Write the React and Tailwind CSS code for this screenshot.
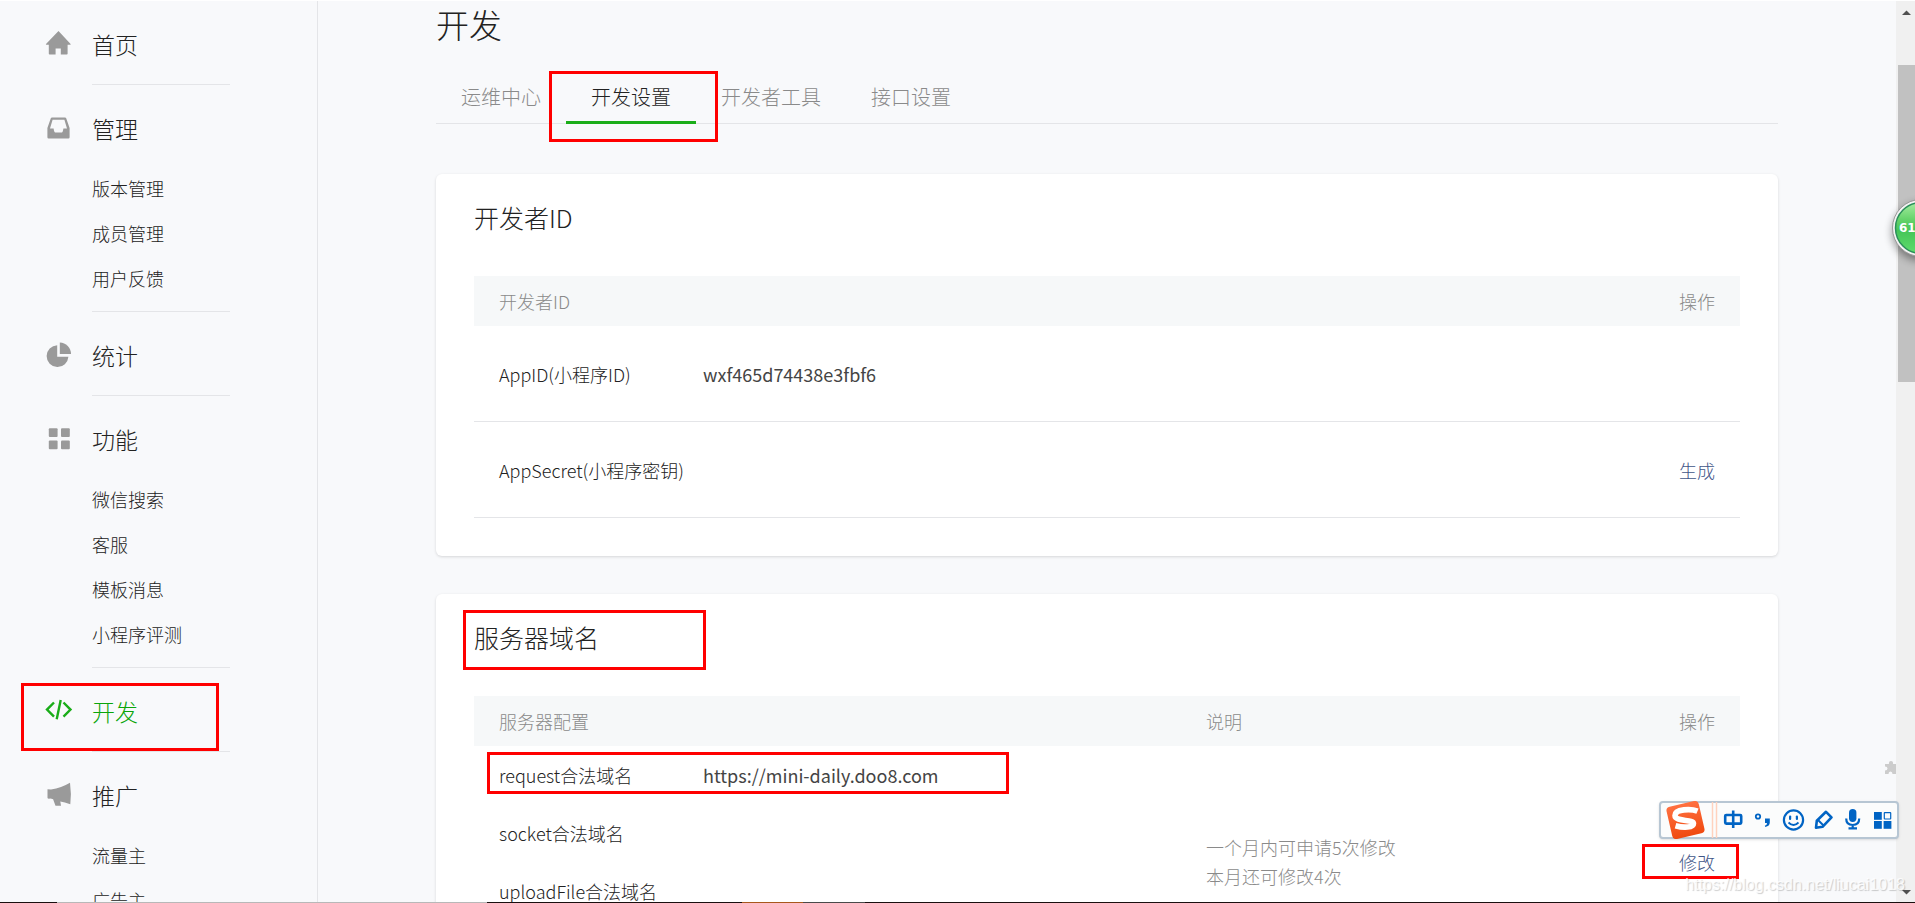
import React from 'react';

const menu = [
  { title: '首页', icon: 'home', children: [] },
  { title: '管理', icon: 'inbox', children: ['版本管理', '成员管理', '用户反馈'] },
  { title: '统计', icon: 'pie', children: [] },
  { title: '功能', icon: 'grid', children: ['微信搜索', '客服', '模板消息', '小程序评测'] },
  { title: '开发', icon: 'code', children: [], active: true, marked: true },
  { title: '推广', icon: 'horn', children: ['流量主', '广告主'] },
];

const tabs = ['运维中心', '开发设置', '开发者工具', '接口设置'];

const domains = [
  { name: 'request合法域名', value: 'https://mini-daily.doo8.com' },
  { name: 'socket合法域名', value: '' },
  { name: 'uploadFile合法域名', value: '' },
  { name: 'downloadFile合法域名', value: '' },
];

const MenuIcon = ({ name }) => (
  <svg width="28" height="28" viewBox="0 0 28 28" fill="currentColor" aria-hidden="true">
    {name === 'home' && (
      <path d="M13.500 1 1 14q-.4.8.4.8h2.400v9q0 .8.8.8h6v-6.200h5.200v6.200h6q.8 0 .8-.8v-9h2.600q.8 0 .4-.8z" />
    )}
    {name === 'inbox' && (
      <path
        fillRule="evenodd"
        d="M7 3.500h13q.9 0 1.200.8L24.600 14V23.300Q24.600 24.500 23.400 24.500H3.600Q2.400 24.500 2.400 23.300V14L5.800 4.300Q6.100 3.500 7 3.500zM7.600 5.700 5 14.500H8.600Q9.200 18.500 10.200 18.500H16.800Q17.800 18.500 18.400 14.500H22L19.400 5.700z"
      />
    )}
    {name === 'pie' && (
      <>
        <path d="M12.200 4.200V15.800H23.400A10.900 10.900 0 1 1 12.200 4.200z" />
        <path d="M14.800 1.600A11.400 11.400 0 0 1 26 13H14.800z" />
      </>
    )}
    {name === 'grid' && (
      <>
        <rect x="3.800" y="3.200" width="8.800" height="8.800" rx="1" />
        <rect x="16" y="3.200" width="8.800" height="8.800" rx="1" />
        <rect x="3.800" y="15.400" width="8.800" height="8.800" rx="1" />
        <rect x="16" y="15.400" width="8.800" height="8.800" rx="1" />
      </>
    )}
    {name === 'code' && (
      <g fill="none" stroke="currentColor" strokeWidth="2.400">
        <path d="M9 5.500 2 12.600l7 7.100M18.500 5.500l7 7.100-7 7.100M15.700 2.900l-4 19.400" />
      </g>
    )}
    {name === 'horn' && (
      <path d="M2.500 8.200q2 0 3.500.3Q16.500 6.700 25 1.700q1.600 11 .3 21.500Q19.500 21.200 15.300 20.500L16 24.700H10.500L8.100 18.200Q5.500 17.200 4 17.700 2.500 17.700 2.500 16.700z" />
    )}
  </svg>
);

const Mark = ({ className }) => (
  <span className={`pointer-events-none absolute border-3 border-[#ff0000] ${className}`} />
);

const Sidebar = () => (
  <nav className="w-[318px] shrink-0 border-r border-[#e4e5e8]">
    <ul>
      {menu.map((item, i) => (
        <li key={item.title} className="relative flex">
          <span className={`w-[92px] shrink-0 pl-[45px] pt-[30px] ${item.active ? 'text-[#1aad19]' : 'text-[#9a9a9a]'}`}>
            <MenuIcon name={item.icon} />
          </span>
          <div
            className={`w-[138px] border-t pt-[21px] ${i > 0 ? 'border-[#e4e5e8]' : 'border-transparent'} ${
              item.children.length ? 'pb-[10px]' : 'pb-[17px]'
            }`}
          >
            <a
              href="#"
              className={`block text-[23px] leading-[45px] ${item.active ? 'text-[#0aa50a]' : 'text-[#222222]'}`}
            >
              {item.title}
            </a>
            {item.children.length > 0 && (
              <ul className="mt-[15px]">
                {item.children.map((child) => (
                  <li key={child}>
                    <a href="#" className="block text-lg leading-[45px] text-[#222222]">
                      {child}
                    </a>
                  </li>
                ))}
              </ul>
            )}
          </div>
          {item.marked && <Mark className="left-[21px] top-4 h-[68px] w-[198px]" />}
        </li>
      ))}
    </ul>
  </nav>
);

const Tabs = () => (
  <div className="flex border-b border-[#e4e5e8]">
    {tabs.map((tab, i) => (
      <div key={tab} className="relative">
        <a
          href="#"
          className={`-mb-px block border-b-3 px-[25px] pb-2 text-xl leading-8 ${
            i === 1 ? 'border-[#1aad19] text-[#222222]' : 'border-transparent text-[#8a8a8a]'
          }`}
        >
          {tab}
        </a>
        {i === 1 && <Mark className="-left-[17px] -top-[10px] z-10 h-[71px] w-[169px]" />}
      </div>
    ))}
  </div>
);

const Card = ({ title, marked, children }) => (
  <section className="rounded-md bg-white px-[38px] pb-[38px] pt-[26px] shadow-[0_1px_3px_rgba(0,0,0,0.14)]">
    <h2 className="relative mb-[42px] text-[25px] leading-[34px] text-[#222222]">
      {title}
      {marked && <Mark className="-left-[11px] -top-[10px] h-[60px] w-[243px]" />}
    </h2>
    {children}
  </section>
);

const headCell = 'h-[50px] bg-[#f6f8f9] px-[25px] font-light text-[#8a8a8a]';
const lineCell = 'h-24 border-b border-[#e4e5e8]';

const DeveloperTable = () => (
  <table className="w-full table-fixed border-separate border-spacing-0 text-lg text-[#222222]">
    <thead>
      <tr>
        <th className={`${headCell} w-[204px] text-left`}>开发者ID</th>
        <th className={headCell} />
        <th className={`${headCell} w-40 text-right`}>操作</th>
      </tr>
    </thead>
    <tbody>
      <tr>
        <td className={`${lineCell} whitespace-nowrap pl-[25px]`}>AppID(小程序ID)</td>
        <td className={`${lineCell} pl-[25px] font-normal text-[#444444]`}>wxf465d74438e3fbf6</td>
        <td className={lineCell} />
      </tr>
      <tr>
        <td className={`${lineCell} whitespace-nowrap pl-[25px]`}>AppSecret(小程序密钥)</td>
        <td className={lineCell} />
        <td className={`${lineCell} pr-[25px] text-right`}>
          <a href="#" className="text-[#3f5688]">生成</a>
        </td>
      </tr>
    </tbody>
  </table>
);

const DomainTable = () => (
  <table className="w-full table-fixed border-separate border-spacing-0 text-lg text-[#222222]">
    <thead>
      <tr>
        <th className={`${headCell} w-[204px] text-left`}>服务器配置</th>
        <th className={headCell} />
        <th className={`${headCell} w-[399px] text-left`}>说明</th>
        <th className={`${headCell} w-40 text-right`}>操作</th>
      </tr>
    </thead>
    <tbody>
      {domains.map((d, i) => (
        <tr key={d.name} className="h-[58px]">
          <td className="relative whitespace-nowrap pl-[25px]">
            {d.name}
            {i === 0 && <Mark className="left-[13px] top-[6px] h-[42px] w-[522px]" />}
          </td>
          <td className="pl-[25px] font-normal text-[#444444]">{d.value}</td>
          {i === 0 && (
            <>
              <td rowSpan={4} className="pl-[25px] leading-[29px] text-[#8a8a8a]">
                <p>一个月内可申请5次修改</p>
                <p>本月还可修改4次</p>
              </td>
              <td rowSpan={4} className="pr-[25px] text-right">
                <span className="relative inline-block">
                  <a href="#" className="text-[#3f5688]">修改</a>
                  <Mark className="-right-6 -top-1 h-[35px] w-[97px]" />
                </span>
              </td>
            </>
          )}
        </tr>
      ))}
    </tbody>
  </table>
);

const Scrollbar = () => (
  <div className="flex w-[19px] shrink-0 flex-col bg-[#f0f0f0] pl-0.5">
    <svg className="h-16 w-full" viewBox="0 0 17 64" fill="#505050" aria-hidden="true">
      <path d="M4 14 8.500 9.500 13 14z" />
    </svg>
    <div className="h-[317px] bg-[#c1c1c1]" />
    <svg className="mt-auto h-5 w-full" viewBox="0 0 17 20" fill="#505050" aria-hidden="true">
      <path d="M4 7h9L8.500 11.500z" />
    </svg>
  </div>
);

const SpeedBall = () => (
  <svg className="absolute -right-[45px] top-[187px]" width="80" height="84" viewBox="0 0 80 84">
    <defs>
      <linearGradient id="ball" x1="0" y1="0" x2="0" y2="1">
        <stop offset="0" stopColor="#a5eba0" />
        <stop offset="0.350" stopColor="#62d268" />
        <stop offset="0.550" stopColor="#45c558" />
        <stop offset="1" stopColor="#5fdc6c" />
      </linearGradient>
      <filter id="ballShadow" x="-30%" y="-30%" width="160%" height="160%">
        <feGaussianBlur stdDeviation="4" />
      </filter>
    </defs>
    <circle cx="41" cy="44" r="29" fill="#000" opacity="0.400" filter="url(#ballShadow)" />
    <circle cx="41" cy="40" r="28.500" fill="#f3f3f3" stroke="#999" />
    <circle cx="41" cy="40" r="25.500" fill="url(#ball)" stroke="#2b8f5a" strokeWidth="1.500" />
    <text x="19" y="44" fontSize="12" fontWeight="700" fill="#fff" fontFamily="DejaVu Sans">61</text>
  </svg>
);

const InputToolbar = () => (
  <div className="absolute bottom-16 right-4 flex h-[38px] w-60 items-center rounded border-2 border-[#b7c6d3] bg-[#fbfcfc] text-[#0064c4] shadow-sm">
    <svg width="236" height="38" viewBox="0 0 236 38" className="-my-0.5 shrink-0" aria-hidden="true">
      <defs>
        <linearGradient id="sogou" x1="0" y1="0" x2="0" y2="1">
          <stop offset="0" stopColor="#ff7040" />
          <stop offset="1" stopColor="#f04a10" />
        </linearGradient>
      </defs>
      <rect x="8" y="2.500" width="33" height="33" rx="4" fill="url(#sogou)" transform="rotate(-13 24.500 19)" />
      <path
        d="M36.500 10.200C30 7.500 14 8 14 14.500c0 6.500 18.500 3.500 18.500 8 0 4.200-10 4.500-18 2.200"
        fill="none"
        stroke="#fff"
        strokeWidth="5.600"
      />
      <path d="M51.500 1v36M55.500 1v36" stroke="#ffd2be" strokeWidth="1.500" />
      <g fill="none" stroke="currentColor" strokeWidth="2.600">
        <rect x="64.200" y="14" width="16" height="8.600" rx="1" />
        <path d="M72.200 9.500v17.500" />
        <circle cx="97" cy="15.500" r="2.200" strokeWidth="1.800" />
        <circle cx="132.500" cy="19" r="9.600" strokeWidth="2.200" />
        <path d="M127.500 21.500q5 5 10 0" strokeWidth="1.800" />
        <path d="M165 10.800l5.500 5.500-9 9.500-6.500 1 .8-7z" strokeWidth="2.600" strokeLinejoin="round" />
        <path d="M156.500 18.500l6 6" strokeWidth="2" />
        <path d="M185.200 17.500q0 6.500 6.500 6.500t6.500-6.500M191.700 24v3.500M187.500 27.300h8.500" strokeWidth="2.200" />
        <rect x="223.300" y="11.600" width="6.400" height="6.400" rx="0.500" strokeWidth="1.200" />
      </g>
      <g fill="currentColor">
        <path d="M104 17.500h4.800v4q0 3.500-4.500 4.500l-.5-1.200q2.400-.8 2.200-2.800h-2z" />
        <rect x="128" y="14.500" width="2.200" height="4.500" rx="1" />
        <rect x="134.800" y="14.500" width="2.200" height="4.500" rx="1" />
        <rect x="188" y="8" width="7.400" height="13" rx="3.700" />
        <rect x="213" y="11" width="7.800" height="7.800" />
        <rect x="213" y="20" width="7.800" height="7.800" />
        <rect x="222.600" y="20" width="7.800" height="7.800" />
      </g>
    </svg>
  </div>
);

const App = () => {
  return (
    <div className="relative flex h-screen overflow-hidden border-t border-white bg-[#f8f9fb] font-['Noto_Sans_CJK_SC',sans-serif] font-light">
      <div className="-mt-px flex min-w-0 flex-1">
        <Sidebar />
        <main className="min-w-0 flex-1 px-[118px]">
          <h1 className="mb-[33px] text-[33px] leading-[48px] text-[#222222]">开发</h1>
          <Tabs />
          <div className="mt-[50px] flex flex-col gap-[38px]">
            <Card title="开发者ID">
              <DeveloperTable />
            </Card>
            <Card title="服务器域名" marked>
              <DomainTable />
            </Card>
          </div>
        </main>
      </div>
      <Scrollbar />

      <svg className="absolute bottom-[129px] right-[19px]" width="11" height="13" viewBox="0 0 11 13" fill="#cccccc">
        <path d="M0 3h4Q3.500 0 6 0t2 3h3v10H7.500q0-2.500-2-2.500t-2 2.500H0V9.500q2.500 0 2.500-2T0 5.500z" />
      </svg>
      <SpeedBall />
      <InputToolbar />
      <span className="absolute bottom-1 right-2.5 font-['Liberation_Sans',sans-serif] text-base leading-7 text-white/80 [text-shadow:1px_1px_1px_rgba(0,0,0,0.2)]">
        https://blog.csdn.net/liucai1018
      </span>

      <div className="absolute inset-x-0 bottom-0 flex h-px bg-[#1a0f0f]">
        <span className="w-[57px]" />
        <span className="w-[430px] bg-[#b8b8b8]" />
        <span className="w-[255px]" />
        <span className="w-[61px] bg-[#a8581c]" />
        <span className="w-[62px] bg-[#4a4a4a]" />
      </div>
    </div>
  );
};

export default App;
